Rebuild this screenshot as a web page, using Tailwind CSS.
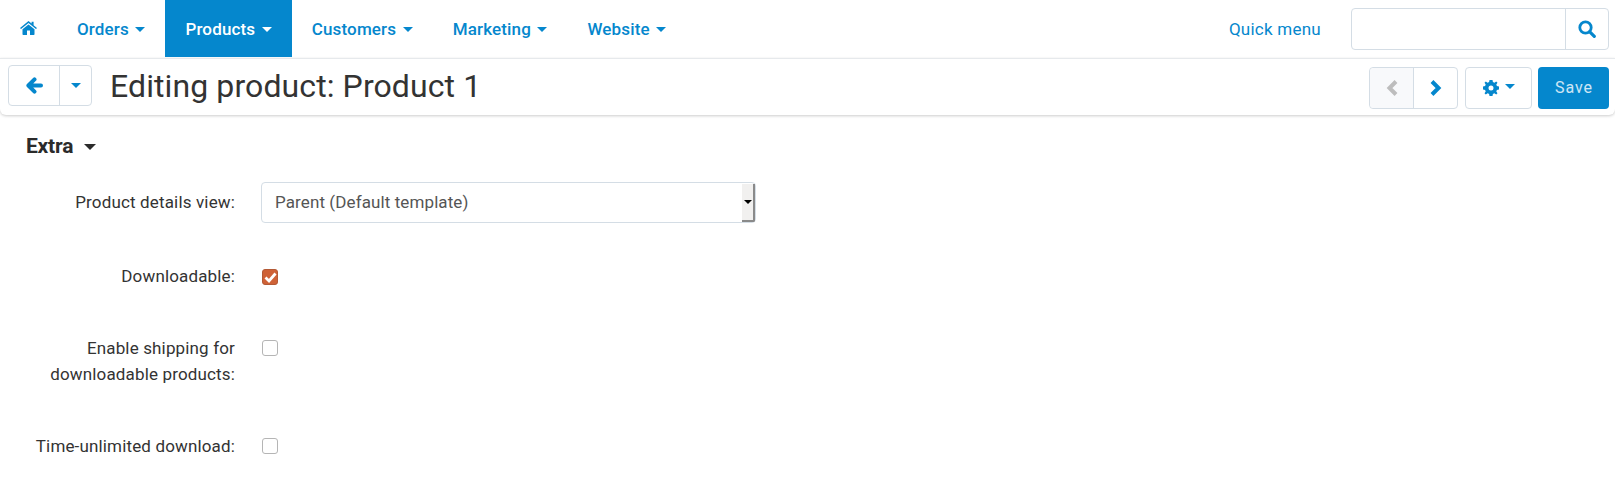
<!DOCTYPE html>
<html><head><meta charset="utf-8"><script src="https://cdn.jsdelivr.net/npm/@tailwindcss/browser@4"></script></head>
<body class="bg-white font-['Roboto',sans-serif] text-[#333] overflow-hidden">
<div class="w-[1615px] h-[480px] overflow-hidden">
  <nav class="h-[58px] pb-[1px] flex items-stretch text-[#0587cd] text-[17px] tracking-[0.15px] font-medium bg-white">
    <a class="pl-[20px] pr-[20px] pb-[2px] flex items-center w-[57px]"><svg class="w-[17px] h-[14px] shrink-0" viewBox="0 0 17 14" fill="#0587cd"><path d="M8.5 0 L11.6 2.5 V0.8 H13.6 V4.2 L17 7 L16 8.1 L8.5 2 L1 8.1 L0 7 Z"/><path d="M8.5 3.4 L14.5 8.2 V13.2 Q14.5 14 13.7 14 H10 V9.6 H7 V14 H3.3 Q2.5 14 2.5 13.2 V8.2 Z"/></svg></a>
    <a class="px-[20px] pt-[2px] flex items-center gap-[6.5px]">Orders<span class="w-0 h-0 border-x-[5px] border-x-transparent border-t-[5px] border-t-[#0587cd]"></span></a>
    <a class="px-[20px] pt-[2px] flex items-center gap-[6.5px] bg-[#0587cd] text-white">Products<span class="w-0 h-0 border-x-[5px] border-x-transparent border-t-[5px] border-t-white"></span></a>
    <a class="px-[20px] pt-[2px] flex items-center gap-[6.5px]">Customers<span class="w-0 h-0 border-x-[5px] border-x-transparent border-t-[5px] border-t-[#0587cd]"></span></a>
    <a class="px-[20px] pt-[2px] flex items-center gap-[6.5px]">Marketing<span class="w-0 h-0 border-x-[5px] border-x-transparent border-t-[5px] border-t-[#0587cd]"></span></a>
    <a class="px-[20px] pt-[2px] flex items-center gap-[6.5px]">Website<span class="w-0 h-0 border-x-[5px] border-x-transparent border-t-[5px] border-t-[#0587cd]"></span></a>
    <a class="ml-auto pt-[2px] flex items-center font-normal tracking-[0.25px] mr-[30px]">Quick menu</a>
    <div class="self-start mt-[8px] mr-[6px] w-[258px] h-[42px] border border-[#d4dde5] rounded-[4px] flex justify-end">
      <div class="w-[43px] border-l border-[#d4dde5] flex items-center justify-center"><svg class="w-[18px] h-[18px]" viewBox="0 0 18 18" fill="none" stroke="#0587cd"><circle cx="7.5" cy="7.5" r="5.7" stroke-width="2.8"/><path d="M11.8 11.8 L16.3 16.3" stroke-width="3.2" stroke-linecap="round"/></svg></div>
    </div>
  </nav>
  <header class="h-[57px] pt-[2px] pl-[8px] pr-[6px] flex items-center rounded-b-[6px] bg-white border-t border-[#e6e9ec] shadow-[0_1px_3px_rgba(0,0,0,0.2)]">
    <div class="flex h-[41px] w-[84px] mb-[5px] border border-[#d4dde5] rounded-[4px]">
      <div class="w-[51px] border-r border-[#d4dde5] flex items-center justify-center"><svg class="w-[17px] h-[17px]" viewBox="0 0 17 17" fill="none" stroke="#0587cd" stroke-width="4" stroke-linecap="round" stroke-linejoin="round"><path d="M8.5 2.4 L2.4 8.5 L8.5 14.6 M3 8.5 H15"/></svg></div>
      <div class="flex-1 flex items-center justify-center"><span class="w-0 h-0 border-x-[5px] border-x-transparent border-t-[5px] border-t-[#0587cd]"></span></div>
    </div>
    <h1 class="ml-[18px] mb-[5px] text-[32px] tracking-[0.1px] font-normal leading-none">Editing product: Product 1</h1>
    <div class="ml-auto flex h-[42px] w-[89px] border border-[#d4dde5] rounded-[4px]">
      <div class="w-[44px] bg-[#f8f9fb] rounded-l-[4px] border-r border-[#d4dde5] flex items-center justify-center"><svg class="w-[12px] h-[16px]" viewBox="0 0 12 16" fill="none" stroke="#bdbdbd" stroke-width="4"><path d="M10 1.5 L3.5 8 L10 14.5"/></svg></div>
      <div class="flex-1 flex items-center justify-center"><svg class="w-[12px] h-[16px]" viewBox="0 0 12 16" fill="none" stroke="#0587cd" stroke-width="4"><path d="M2 1.5 L8.5 8 L2 14.5"/></svg></div>
    </div>
    <div class="ml-[7px] h-[42px] w-[67px] border border-[#d4dde5] rounded-[4px] flex items-center justify-center gap-[6px]">
      <svg class="w-[16px] h-[16px]" viewBox="0 0 16 16"><path fill="#0587cd" fill-rule="evenodd" d="M6.5 0 H9.5 L9.9 2.1 L11.4 2.7 L13.2 1.5 L14.5 2.8 L13.3 4.6 L13.9 6.1 L16 6.5 V9.5 L13.9 9.9 L13.3 11.4 L14.5 13.2 L13.2 14.5 L11.4 13.3 L9.9 13.9 L9.5 16 H6.5 L6.1 13.9 L4.6 13.3 L2.8 14.5 L1.5 13.2 L2.7 11.4 L2.1 9.9 L0 9.5 V6.5 L2.1 6.1 L2.7 4.6 L1.5 2.8 L2.8 1.5 L4.6 2.7 L6.1 2.1 Z M8 5.5 A2.5 2.5 0 1 0 8 10.5 A2.5 2.5 0 1 0 8 5.5 Z"/></svg>
      <span class="w-0 h-0 mb-[3px] border-x-[5px] border-x-transparent border-t-[5px] border-t-[#0587cd]"></span>
    </div>
    <button class="ml-[6px] h-[42px] w-[71px] pl-[1px] bg-[#0587cd] text-white/80 rounded-[4px] text-[16px] tracking-[0.9px]">Save</button>
  </header>
  <main class="pt-[14px]">
    <h3 class="pl-[26px] flex items-center gap-[11px] text-[21px] font-bold tracking-[-0.2px] text-[#2b2b2b] leading-[34px]">Extra<span class="w-0 h-0 mt-[2px] border-x-[6px] border-x-transparent border-t-[6px] border-t-[#2b2b2b]"></span></h3>
    <div class="mt-[19px] text-[17px] leading-[27px] tracking-[0.15px]">
      <div class="flex h-[81px]">
        <label class="w-[235px] text-right pt-[7px]">Product details view:</label>
        <div class="ml-[26px] w-[495px] h-[41px] border border-[#d4dde5] rounded-[4px] flex items-center pl-[13px] relative text-[#555] tracking-[0.1px]">Parent (Default template)
          <span class="absolute right-0 top-[1px] bottom-0 w-[13px] bg-[#f1f0ef] border-r-2 border-b-2 border-[#8a8a8a] rounded-br-[2px] flex items-center justify-center"><span class="w-0 h-0 border-x-[4px] border-x-transparent border-t-[4px] border-t-black"></span></span>
        </div>
      </div>
      <div class="flex h-[72px]">
        <label class="w-[235px] text-right">Downloadable:</label>
        <span class="ml-[27px] mt-[6px] w-[16px] h-[16px] rounded-[3px] bg-[#cf6237] border border-[#b35a36] flex items-center justify-center"><svg class="w-[13px] h-[13px] shrink-0" viewBox="0 0 13 13" fill="none" stroke="#fff" stroke-width="2.8"><path d="M1.5 6.5 L5 10 L11.5 2.5"/></svg></span>
      </div>
      <div class="flex h-[98px]">
        <label class="w-[235px] text-right leading-[26px]">Enable shipping for<br>downloadable products:</label>
        <span class="ml-[27px] mt-[5px] w-[16px] h-[16px] rounded-[3px] bg-white border border-[#b5b5b5]"></span>
      </div>
      <div class="flex">
        <label class="w-[235px] text-right">Time-unlimited download:</label>
        <span class="ml-[27px] mt-[5px] w-[16px] h-[16px] rounded-[3px] bg-white border border-[#b5b5b5]"></span>
      </div>
    </div>
  </main>
</div>
</body></html>
